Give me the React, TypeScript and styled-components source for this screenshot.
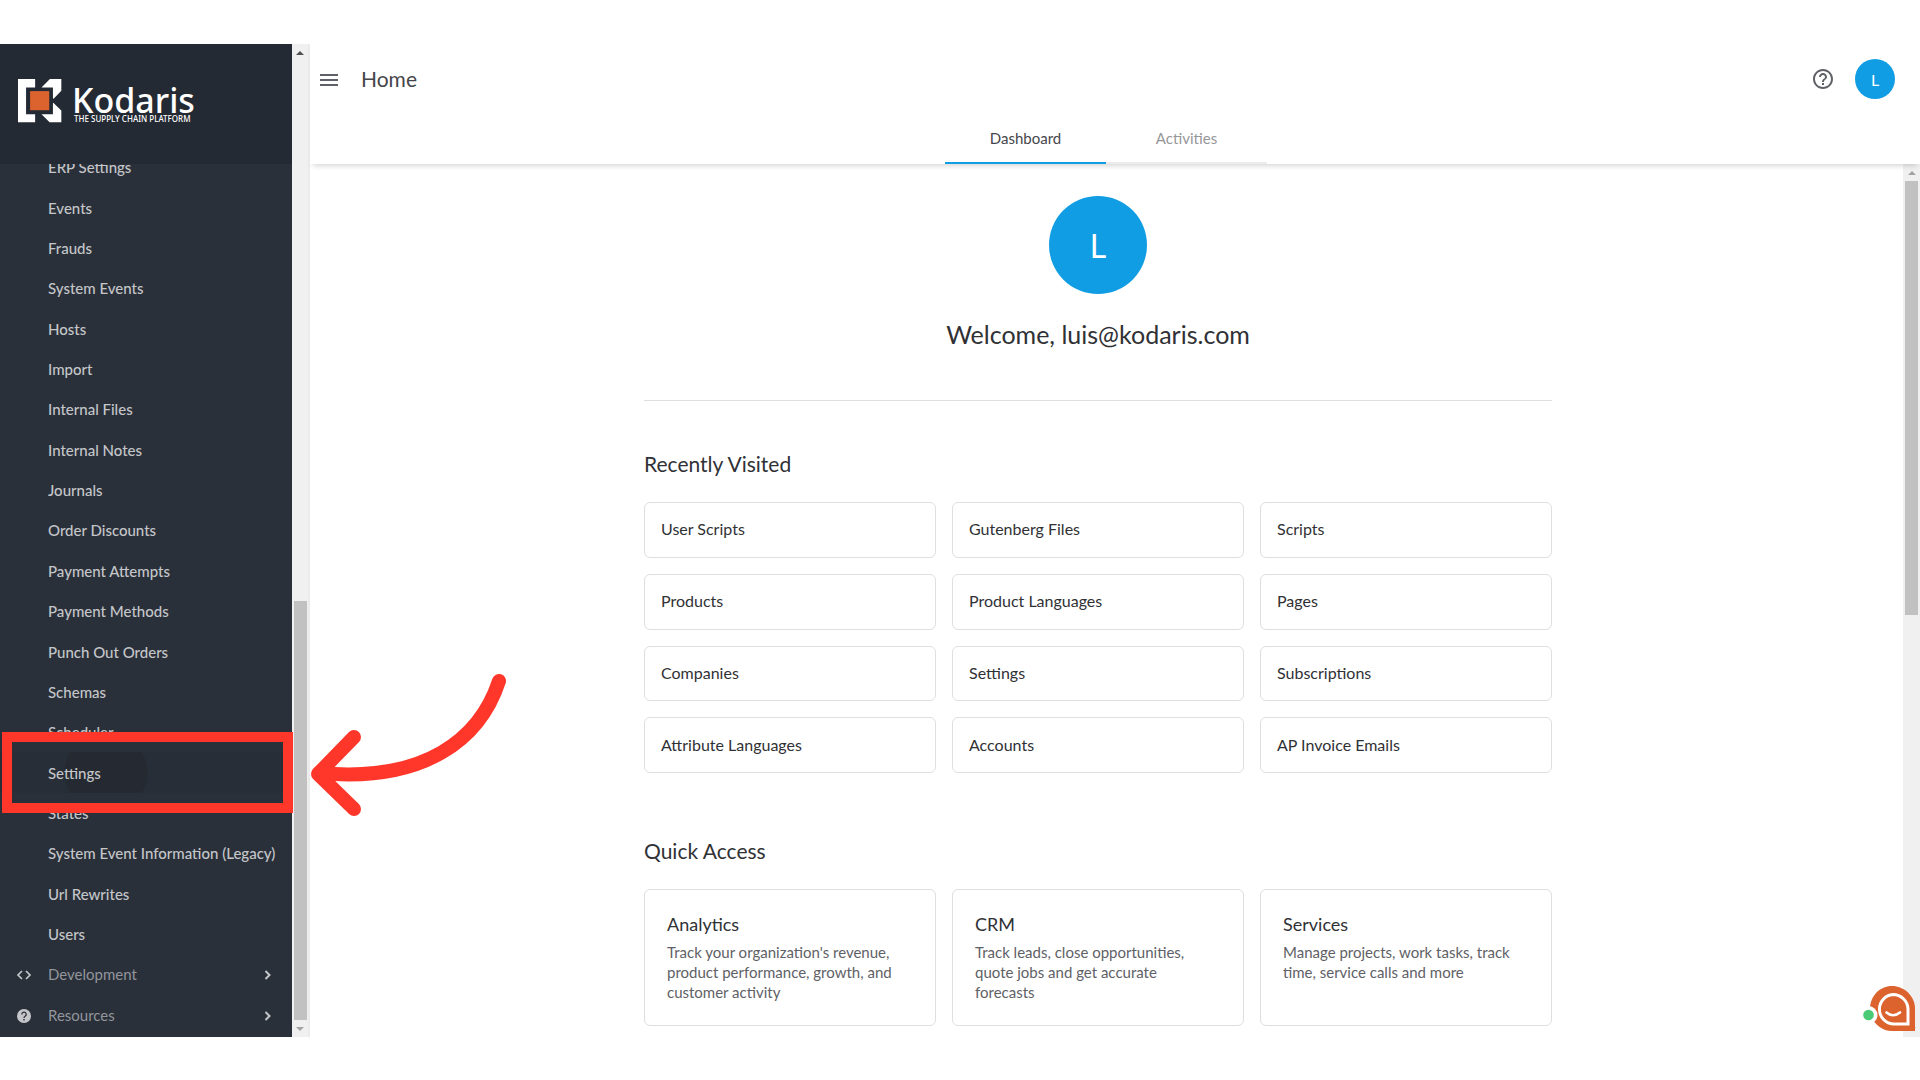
import React from "react";
import styled, { createGlobalStyle } from "styled-components";

const GlobalStyle = createGlobalStyle`
  *, *::before, *::after { box-sizing: border-box; }
  body {
    margin: 0;
    background: #fff;
    color: #303135;
    font-family: Lato, "Open Sans", sans-serif;
    font-size: 16px;
  }
  h1, h2, h3, p, ul { margin: 0; padding: 0; font-weight: 400; }
  ul { list-style: none; }
  a { color: inherit; text-decoration: none; }
  button { font: inherit; border: 0; padding: 0; cursor: pointer; }
`;

const Page = styled.div`
  display: flex;
  height: 100vh;
  min-height: 720px;
  padding: 44px 0 43px;
`;

const Sidebar = styled.aside`
  display: flex;
  flex-direction: column;
  flex: none;
  width: 292px;
  background: #2a303a;
`;

const Brand = styled.a`
  z-index: 1;
  display: flex;
  flex: none;
  gap: 10px;
  height: 120px;
  padding: 35px 0 0 18px;
  background: #242a33;
  color: #fff;
`;

const BrandText = styled.span`
  display: flex;
  flex-direction: column;
  font-family: "Noto Sans", sans-serif;
`;

const BrandName = styled.span`
  padding-top: 6px;
  font-size: 34px;
  font-weight: 500;
  line-height: 30px;
`;

const BrandTag = styled.span`
  padding-left: 2px;
  font-size: 8px;
  font-weight: 500;
  line-height: 8px;
`;

const NavList = styled.ul`
  display: grid;
  flex: 1;
  grid-auto-rows: 1fr;
  min-height: 0;
  margin-top: -17px;
  padding-bottom: 2px;
  font-size: 15px;
`;

const NavItem = styled.li`
  position: relative;
  display: grid;
  min-height: 0;
`;

const NavLink = styled.a<{ $group?: boolean; $pressed?: boolean }>`
  display: flex;
  align-items: center;
  padding: 0 16px 0 ${(p) => (p.$group ? "16px" : "48px")};
  gap: 16px;
  color: ${(p) => (p.$group ? "#92959a" : "#c4c6c9")};
  font-weight: ${(p) => (p.$group ? 400 : 500)};
  white-space: nowrap;
  background: ${(p) =>
    p.$pressed
      ? "radial-gradient(circle at 106px 50%, #252a32 41px, #282e38 42px)"
      : "none"};
  svg { flex: none; color: #c4c6c9; }
  svg:last-child { margin-left: auto; }
`;

const Highlight = styled.span`
  position: absolute;
  inset: -20px -1px -20px 2px;
  z-index: 2;
  border: 10px solid #ff372b;
  pointer-events: none;
`;

const Arrow = styled.svg`
  position: absolute;
  top: -80px;
  left: 301px;
  z-index: 2;
  pointer-events: none;
`;

const ScrollTrack = styled.div<{ $edge?: boolean }>`
  display: flex;
  flex-direction: column;
  align-items: center;
  flex: none;
  width: ${(p) => (p.$edge ? "18px" : "17px")};
  border-right: ${(p) => (p.$edge ? "2px solid #ebebeb" : "0")};
  background: #f0f0f0;
`;

const ScrollThumb = styled.span<{ $before: number; $size: number; $after: number }>`
  display: grid;
  flex: 1;
  width: 13px;
  grid-template-rows: ${(p) => `${p.$before}fr ${p.$size}fr ${p.$after}fr`};
  &::before {
    content: "";
    grid-row: 2;
    background: #c1c1c1;
  }
`;

const ScrollArrow = styled.span<{ $down?: boolean; $dark?: boolean }>`
  display: grid;
  place-items: center;
  height: 17px;
  &::before {
    content: "";
    border: 4px solid transparent;
    border-top: ${(p) => (p.$down ? "4px solid #a3a3a3" : "0")};
    border-bottom: ${(p) =>
      p.$down ? "0" : `4px solid ${p.$dark ? "#505050" : "#a3a3a3"}`};
  }
`;

const Main = styled.div`
  display: flex;
  flex: 1;
  flex-direction: column;
  min-width: 0;
`;

const Header = styled.header`
  z-index: 1;
  display: flex;
  flex: none;
  flex-direction: column;
  justify-content: space-between;
  height: 120px;
  background: #fff;
  box-shadow: 0 5px 5px -3px rgba(0, 0, 0, 0.16);
`;

const Toolbar = styled.div`
  display: flex;
  align-items: center;
  padding: 15px 25px 0 7px;
`;

const IconButton = styled.button`
  display: grid;
  place-items: center;
  width: 24px;
  height: 24px;
  background: none;
  color: #5f6166;
`;

const PageTitle = styled.h1`
  flex: 1;
  margin-left: 20px;
  font-size: 21px;
  line-height: 24px;
  color: #45464b;
`;

const Avatar = styled.button`
  width: 40px;
  height: 40px;
  margin-left: 20px;
  border-radius: 50%;
  background: #109de3;
  color: #fff;
`;

const Tabs = styled.nav`
  display: flex;
  justify-content: center;
  padding-right: 18px;
`;

const Tab = styled.a<{ $active?: boolean }>`
  width: 161px;
  height: 50px;
  border-bottom: 2px solid ${(p) => (p.$active ? "#109de3" : "#ececec")};
  color: ${(p) => (p.$active ? "#45464b" : "#96979a")};
  font-size: 15px;
  line-height: 48px;
  text-align: center;
`;

const Body = styled.div`
  display: flex;
  flex: 1;
  min-height: 0;
`;

const Content = styled.main`
  flex: 1;
  overflow: hidden;
  padding: 32px 17px 0 0;
`;

const Column = styled.div`
  display: flex;
  flex-direction: column;
  max-width: 908px;
  margin: 0 auto;
`;

const Welcome = styled.section`
  display: flex;
  flex-direction: column;
  align-items: center;
  gap: 24px;
  padding-bottom: 50px;
  border-bottom: 1px solid #dfdfe1;
`;

const BigAvatar = styled.span`
  display: grid;
  place-items: center;
  width: 98px;
  height: 98px;
  border-radius: 50%;
  background: #109de3;
  color: #fff;
  font-size: 32px;
`;

const WelcomeText = styled.h2`
  font-size: 25px;
  line-height: 32px;
`;

const Section = styled.section<{ $gap: number }>`
  padding-top: ${(p) => p.$gap}px;
`;

const SectionTitle = styled.h2`
  padding-bottom: 24px;
  font-size: 21px;
  line-height: 28px;
`;

const Cards = styled.div<{ $height: number }>`
  display: grid;
  grid-template-columns: repeat(3, 1fr);
  grid-auto-rows: 1fr;
  gap: 16px;
  min-height: ${(p) => p.$height}px;
`;

const LinkCard = styled.a`
  display: flex;
  align-items: center;
  padding: 0 16px 2px;
  border: 1px solid #dfdfe3;
  border-radius: 6px;
`;

const InfoCard = styled.a`
  padding: 23px 32px 23px 22px;
  border: 1px solid #dfdfe3;
  border-radius: 6px;
`;

const InfoTitle = styled.h3`
  padding-bottom: 7px;
  font-size: 18px;
  line-height: 22px;
`;

const InfoText = styled.p`
  color: #606166;
  font-size: 15px;
  line-height: 20px;
`;

const ChatButton = styled.button`
  position: absolute;
  right: 4px;
  bottom: 48px;
  z-index: 3;
  width: 54px;
  height: 47px;
  background: none;
`;

const navItems = [
  "ERP Settings", "Events", "Frauds", "System Events", "Hosts", "Import",
  "Internal Files", "Internal Notes", "Journals", "Order Discounts",
  "Payment Attempts", "Payment Methods", "Punch Out Orders", "Schemas",
  "Scheduler", "Settings", "States", "System Event Information (Legacy)",
  "Url Rewrites", "Users",
];

const recent = [
  "User Scripts", "Gutenberg Files", "Scripts",
  "Products", "Product Languages", "Pages",
  "Companies", "Settings", "Subscriptions",
  "Attribute Languages", "Accounts", "AP Invoice Emails",
];

const quick = [
  { title: "Analytics", text: "Track your organization's revenue, product performance, growth, and customer activity" },
  { title: "CRM", text: "Track leads, close opportunities, quote jobs and get accurate forecasts" },
  { title: "Services", text: "Manage projects, work tasks, track time, service calls and more" },
];

const Mark = () => (
  <svg width="44" height="44" viewBox="0 0 131 131" aria-hidden="true">
    <path fill="#fff" d="M0 0H51V25H24V105H51V129H0Z" />
    <path fill="#fff" d="M95 0H129V35L106 59L104 57V25H70Z" />
    <path fill="#fff" d="M105 71L129 94V129H94L70 105H104V72Z" />
    <path fill="#dc632e" d="M36 36H93V93H36Z" />
  </svg>
);

const Chevron = () => (
  <svg width="16" height="16" viewBox="0 0 16 16" fill="none" stroke="currentColor" strokeWidth="2" aria-hidden="true">
    <path d="M5.500 5L9.500 9L5.500 13" />
  </svg>
);

const CodeIcon = () => (
  <svg width="16" height="16" viewBox="0 0 16 16" fill="none" stroke="currentColor" strokeWidth="1.700" aria-hidden="true">
    <path d="M6 5L2 9L6 13M10 5L14 9L10 13" />
  </svg>
);

const HelpSolid = () => (
  <svg width="16" height="16" viewBox="0 0 16 16" aria-hidden="true">
    <circle cx="8" cy="9" r="7" fill="currentColor" />
    <path d="M5.800 7.400a2.200 2.200 0 1 1 3.300 1.900c-.8.500-1.100.8-1.100 1.700" fill="none" stroke="#2a303a" strokeWidth="1.300" />
    <path d="M7.300 12h1.400v1.400h-1.400z" fill="#2a303a" />
  </svg>
);

const HelpOutline = () => (
  <svg width="24" height="24" viewBox="0 0 24 24" fill="currentColor" aria-hidden="true">
    <path d="M11 18h2v-2h-2v2zm1-16C6.480 2 2 6.480 2 12s4.480 10 10 10 10-4.480 10-10S17.520 2 12 2zm0 18c-4.410 0-8-3.590-8-8s3.590-8 8-8 8 3.590 8 8-3.590 8-8 8zm0-14c-2.210 0-4 1.790-4 4h2c0-1.100.9-2 2-2s2 .9 2 2c0 2-3 1.750-3 5h2c0-2.250 3-2.500 3-5 0-2.210-1.790-4-4-4z" />
  </svg>
);

const MenuIcon = () => (
  <svg width="20" height="16" viewBox="0 0 20 16" fill="none" stroke="currentColor" strokeWidth="2" aria-hidden="true">
    <path d="M1 4H19M1 9H19M1 14H19" />
  </svg>
);

export default function App() {
  return (
    <Page>
      <GlobalStyle />
      <Sidebar>
        <Brand href="#home">
          <Mark />
          <BrandText>
            <BrandName>Kodaris</BrandName>
            <BrandTag>THE SUPPLY CHAIN PLATFORM</BrandTag>
          </BrandText>
        </Brand>
        <NavList>
          {navItems.map((label) => (
            <NavItem key={label}>
              <NavLink href="#nav" $pressed={label === "Settings"}>{label}</NavLink>
              {label === "Settings" && (
                <>
                  <Highlight />
                  <Arrow width="208" height="146" viewBox="0 0 208 146" fill="none" stroke="#ff372b" strokeWidth="14" strokeLinecap="round" strokeLinejoin="round" aria-hidden="true">
                    <path d="M198 9C179 67 124 111 18 101" />
                    <path d="M53 65L17 102L53 137" />
                  </Arrow>
                </>
              )}
            </NavItem>
          ))}
          <NavItem>
            <NavLink href="#development" $group><CodeIcon />Development<Chevron /></NavLink>
          </NavItem>
          <NavItem>
            <NavLink href="#resources" $group><HelpSolid />Resources<Chevron /></NavLink>
          </NavItem>
        </NavList>
      </Sidebar>
      <ScrollTrack $edge>
        <ScrollArrow $dark />
        <ScrollThumb $before={540} $size={419} $after={0} />
        <ScrollArrow $down />
      </ScrollTrack>
      <Main>
        <Header>
          <Toolbar>
            <IconButton aria-label="Toggle menu"><MenuIcon /></IconButton>
            <PageTitle>Home</PageTitle>
            <IconButton aria-label="Help"><HelpOutline /></IconButton>
            <Avatar aria-label="Account">L</Avatar>
          </Toolbar>
          <Tabs>
            <Tab href="#dashboard" $active>Dashboard</Tab>
            <Tab href="#activities">Activities</Tab>
          </Tabs>
        </Header>
        <Body>
          <Content>
            <Column>
              <Welcome>
                <BigAvatar>L</BigAvatar>
                <WelcomeText>Welcome, luis@kodaris.com</WelcomeText>
              </Welcome>
              <Section $gap={49}>
                <SectionTitle>Recently Visited</SectionTitle>
                <Cards $height={271}>
                  {recent.map((r) => <LinkCard key={r} href="#page">{r}</LinkCard>)}
                </Cards>
              </Section>
              <Section $gap={64}>
                <SectionTitle>Quick Access</SectionTitle>
                <Cards $height={137}>
                  {quick.map((q) => (
                    <InfoCard key={q.title} href="#area">
                      <InfoTitle>{q.title}</InfoTitle>
                      <InfoText>{q.text}</InfoText>
                    </InfoCard>
                  ))}
                </Cards>
              </Section>
            </Column>
          </Content>
          <ScrollTrack>
            <ScrollArrow />
            <ScrollThumb $before={0} $size={434} $after={405} />
            <ScrollArrow $down />
          </ScrollTrack>
        </Body>
      </Main>
      <ChatButton aria-label="Open chat">
        <svg width="54" height="47" viewBox="0 0 54 47" aria-hidden="true">
          <path fill="#dc632e" d="M30 1C18 1 8 11 8 23.500S18 46 30 46H53V23.500C53 11 42 1 30 1Z" />
          <path fill="none" stroke="#fff" strokeWidth="3" d="M31 9.500A14.800 14.800 0 0 0 31 39H46V24A15 15 0 0 0 31 9.500Z" />
          <path fill="none" stroke="#fff" strokeWidth="2.600" strokeLinecap="round" d="M24.500 27.500Q31 33 38 27.500" />
          <circle cx="6.500" cy="30" r="9" fill="#fff" />
          <circle cx="6.500" cy="30" r="5.300" fill="#4bca75" />
        </svg>
      </ChatButton>
    </Page>
  );
}
